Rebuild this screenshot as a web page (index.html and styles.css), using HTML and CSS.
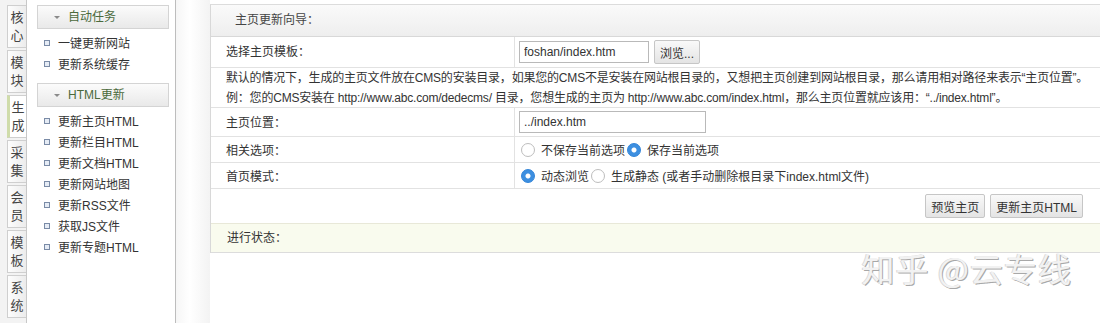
FILE: index.html
```html
<!DOCTYPE html>
<html lang="zh-CN">
<head>
    <meta charset="UTF-8">
    <title>更新主页HTML</title>
    <link rel="stylesheet" href="styles.css">
</head>
<body>
    <div class="tabs">
        <div class="tab">核<br>心</div>
        <div class="tab">模<br>块</div>
        <div class="tab active">生<br>成</div>
        <div class="tab">采<br>集</div>
        <div class="tab">会<br>员</div>
        <div class="tab">模<br>板</div>
        <div class="tab">系<br>统</div>
    </div>

    <div class="sidebar">
        <div class="menu-head"><span class="arrow"></span>自动任务</div>
        <ul class="menu">
            <li>一键更新网站</li>
            <li>更新系统缓存</li>
        </ul>
        <div class="menu-head"><span class="arrow"></span>HTML更新</div>
        <ul class="menu">
            <li>更新主页HTML</li>
            <li>更新栏目HTML</li>
            <li>更新文档HTML</li>
            <li>更新网站地图</li>
            <li>更新RSS文件</li>
            <li>获取JS文件</li>
            <li>更新专题HTML</li>
        </ul>
    </div>

    <div class="spacer"></div>

    <div class="main">
        <div class="panel">
            <div class="panel-head">主页更新向导：</div>
            <div class="row tall">
                <div class="label">选择主页模板：</div>
                <div class="value">
                    <input class="text short" type="text" value="foshan/index.htm">
                    <button class="btn">浏览...</button>
                </div>
            </div>
            <div class="note">
                默认的情况下，生成的主页文件放在CMS的安装目录，如果您的CMS不是安装在网站根目录的，又想把主页创建到网站根目录，那么请用相对路径来表示“主页位置”。<br>
                例：您的CMS安装在 http://www.abc.com/dedecms/ 目录，您想生成的主页为 http://www.abc.com/index.html，那么主页位置就应该用：“../index.html”。
            </div>
            <div class="row mid">
                <div class="label">主页位置：</div>
                <div class="value">
                    <input class="text long" type="text" value="../index.htm">
                </div>
            </div>
            <div class="row">
                <div class="label">相关选项：</div>
                <div class="value">
                    <span class="radio"></span>不保存当前选项
                    <span class="radio on"></span>保存当前选项
                </div>
            </div>
            <div class="row">
                <div class="label">首页模式：</div>
                <div class="value">
                    <span class="radio on"></span>动态浏览
                    <span class="radio"></span>生成静态 (或者手动删除根目录下index.html文件)
                </div>
            </div>
            <div class="actions">
                <button class="btn">预览主页</button>
                <button class="btn">更新主页HTML</button>
            </div>
            <div class="status">进行状态：</div>
        </div>
        <div class="watermark">知乎 @云专线</div>
    </div>
</body>
</html>
```

FILE: styles.css
```css
body {
    display: flex;
    height: 323px;
    margin: 0;
    font-family: "Liberation Sans", "Noto Sans CJK SC", sans-serif;
    font-size: 12px;
    color: #333;
    background-color: #fff;
    overflow: hidden;
}
.tabs {
    width: 19px;
    padding: 5px 0 0 7px;
    background-color: #f3f3f3;
    border-right: 1px solid #c8c8c8;
    display: flex;
    flex-direction: column;
    gap: 2px;
}
.tab {
    height: 38px;
    padding-top: 3px;
    font-size: 13px;
    line-height: 18px;
    text-align: center;
    color: #444;
    background: linear-gradient(to right, #fdfdfd, #ececec);
    border: 1px solid #cfcfcf;
    border-right: none;
}
.tab.active {
    background: #fff;
    border-left: 3px solid #cfdcaa;
}
.sidebar {
    width: 138px;
    padding: 5px 0 0 10px;
    border-right: 1px solid #bdbdbd;
}
.menu-head {
    height: 22px;
    line-height: 22px;
    width: 130px;
    border: 1px solid #d4d4d4;
    background: linear-gradient(#fbfbfb, #e9e9e9);
    color: #4b6a3c;
}
.arrow {
    display: inline-block;
    width: 0;
    height: 0;
    margin: 0 8px 2px 16px;
    border-left: 3px solid transparent;
    border-right: 3px solid transparent;
    border-top: 3px solid #8a8a8a;
}
.menu {
    list-style: none;
    margin: 0;
    padding: 5px 0 7px 7px;
}
.menu li {
    height: 21px;
    line-height: 21px;
    color: #333;
}
.menu li::before {
    content: "";
    display: inline-block;
    width: 4px;
    height: 4px;
    margin: 0 8px 2px 0;
    border: 1px solid #7a8ba6;
    background: #e6ecf5;
}
.spacer {
    width: 34px;
    background: linear-gradient(to right, #f6f6f6, #ffffff 40%, #f3f3f3);
}
.main {
    flex: 1;
    position: relative;
}
.panel {
    margin-top: 4px;
    border-top: 1px solid #dcdcdc;
    border-left: 1px solid #d8d8d8;
}
.panel-head {
    height: 31px;
    line-height: 31px;
    padding-left: 24px;
    background: linear-gradient(#fafafa, #eeeeee);
    border-bottom: 1px solid #d8d8d8;
    color: #444;
}
.row {
    display: flex;
    height: 25px;
    border-bottom: 1px solid #e2e2e2;
}
.row.tall {
    height: 30px;
}
.row.mid {
    height: 28px;
}
.label {
    width: 288px;
    padding: 4px 0 0 15px;
    border-right: 1px solid #e2e2e2;
}
.row.tall .label,
.row.mid .label {
    padding-top: 5px;
}
.value {
    flex: 1;
    display: flex;
    align-items: center;
    padding: 0 4px;
}
.text {
    height: 22px;
    box-sizing: border-box;
    border: 1px solid #b9b9b9;
    padding: 0 4px;
    font-family: "Liberation Sans", "Noto Sans CJK SC", sans-serif;
    font-size: 12px;
    color: #333;
}
.text.short {
    width: 130px;
}
.text.long {
    width: 187px;
}
.btn {
    height: 24px;
    padding: 0 5px;
    margin-left: 5px;
    border: 1px solid #c6c6c6;
    border-radius: 2px;
    background: linear-gradient(#f9f9f9, #e4e4e4);
    font-family: "Liberation Sans", "Noto Sans CJK SC", sans-serif;
    font-size: 12px;
    color: #333;
}
.note {
    height: 39px;
    padding-left: 15px;
    line-height: 20px;
    letter-spacing: -0.2px;
    white-space: nowrap;
    border-bottom: 1px solid #e2e2e2;
}
.radio {
    display: inline-block;
    width: 12px;
    height: 12px;
    border: 1px solid #bdbdbd;
    border-radius: 50%;
    margin: 0 6px 0 2px;
    background: #fff;
}
.radio.on {
    border-color: #2f83d8;
    background: radial-gradient(circle, #fff 2px, #3d8fe0 3px);
}
.actions {
    display: flex;
    justify-content: flex-end;
    align-items: center;
    height: 34px;
    padding-right: 17px;
    border-bottom: 1px solid #e8e8d8;
}
.status {
    height: 28px;
    line-height: 28px;
    padding-left: 16px;
    background: #f9fbee;
    border-bottom: 1px solid #dcdcdc;
}
.watermark {
    position: absolute;
    right: 28px;
    top: 244px;
    font-size: 33px;
    letter-spacing: 1px;
    color: #f2f2f2;
    text-shadow: 1px 1px 0 #a8a8a8, -1px 0 0 #d8d8d8;
    font-family: "Noto Sans CJK SC", sans-serif;
}
```
